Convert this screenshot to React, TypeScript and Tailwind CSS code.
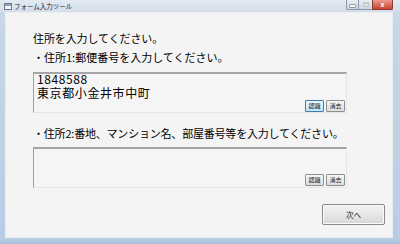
const jp = { fontFamily: '"Noto Sans CJK JP", "Noto Sans", sans-serif' };

function SmallButton({ label, active }: { label: string; active?: boolean }) {
  return (
    <div
      className={
        'flex h-[12px] w-[19px] items-center justify-center rounded-[1px] border text-[6px] leading-none ' +
        (active
          ? 'border-[#3c7fb1] bg-gradient-to-b from-[#eaf6fd] to-[#bee6fd] text-[#1a1a1a]'
          : 'border-[#8e8f8f] bg-gradient-to-b from-[#f6f6f6] to-[#dcdcdc] text-[#222]')
      }
    >
      {label}
    </div>
  );
}

function AddressBox({ lines, activeFirst }: { lines: string[]; activeFirst?: boolean }) {
  return (
    <div className="flex h-[41px] w-[314px] flex-col border-t-2 border-l border-b border-r border-t-[#a5a5a5] border-l-[#a0a0a0] border-b-[#e6e6e6] border-r-[#e6e6e6] bg-[#f5f5f5] pl-[3px] pr-[1px] pb-[1px]">
      <div className="-mt-[2px] text-[12px] leading-[14px] tracking-[0.6px] text-black">
        {lines.map((l) => (
          <div key={l}>{l}</div>
        ))}
      </div>
      <div className="mt-auto flex justify-end gap-[2px]">
        <SmallButton label="認識" active={activeFirst} />
        <SmallButton label="消去" />
      </div>
    </div>
  );
}

export default function App() {
  return (
    <div className="flex h-[244px] w-[400px] flex-col bg-[#c3d4e7]" style={jp}>
      {/* title bar */}
      <div className="flex h-[12px] items-start bg-gradient-to-b from-[#e4eaf2] to-[#d3dde9]">
        <div className="ml-[4px] mt-[3px] h-[7px] w-[8px] border border-[#6b7b8c] bg-[#f4f7fb]">
          <div className="h-[2px] bg-[#8aa3be]" />
        </div>
        <span className="ml-[2px] mt-[2px] text-[6.5px] leading-[8px] text-[#222]">フォーム入力ツール</span>
        <div className="ml-auto mr-[7px] flex h-[10px]">
          <div className="flex w-[13px] items-center justify-center rounded-bl-[2px] border border-t-0 border-[#8b97a5] bg-gradient-to-b from-[#e8edf3] to-[#cdd7e3]">
            <div className="mt-[2px] h-[2px] w-[5px] bg-white shadow-[0_0_0_0.5px_#555]" />
          </div>
          <div className="flex w-[13px] items-center justify-center border-b border-[#8b97a5] bg-gradient-to-b from-[#e8edf3] to-[#cdd7e3]">
            <div className="h-[5px] w-[6px] border border-t-2 border-[#c8c8c8]" />
          </div>
          <div className="flex w-[21px] items-center justify-center rounded-br-[2px] border border-t-0 border-[#8b3b32] bg-gradient-to-b from-[#e79b8e] to-[#c7422f] text-[7px] font-bold leading-none text-white">
            x
          </div>
        </div>
      </div>

      <div className="flex flex-1">
        <div className="w-[5px] bg-gradient-to-b from-[#c9d7e6] to-[#b8cde4]" />
        {/* client */}
        <div className="flex flex-1 flex-col border border-[#e9eef3] bg-[#f4f4f4] pl-[27px]">
          <div className="mt-[18px] text-[11px] leading-[14px] tracking-[-0.1px] text-black">住所を入力してください。</div>
          <div className="mt-[5px] text-[11px] leading-[14px] text-black">・住所1:郵便番号を入力してください。</div>
          <div className="mt-[8px]">
            <AddressBox lines={['1848588', '東京都小金井市中町']} activeFirst />
          </div>
          <div className="mt-[13px] text-[11px] leading-[14px] tracking-[-0.2px] text-black">
            ・住所2:番地、マンション名、部屋番号等を入力してください。
          </div>
          <div className="mt-[7px]">
            <AddressBox lines={[]} />
          </div>
          <div className="mt-[16px] flex pr-[7px]">
            <div className="ml-auto flex h-[21px] w-[63px] items-center justify-center rounded-[2px] border border-[#8a8a8a] bg-gradient-to-b from-[#f3f3f3] via-[#e7e7e7] to-[#d6d6d6] text-[7.5px] text-[#222] shadow-[inset_0_0_0_1px_#fbfbfb]">
              次へ
            </div>
          </div>
        </div>
        <div className="w-[7px] bg-gradient-to-b from-[#c9d7e6] to-[#b8cde4]" />
      </div>
      <div className="h-[6px] bg-gradient-to-b from-[#bcd0e6] to-[#a9c1dc]" />
    </div>
  );
}
